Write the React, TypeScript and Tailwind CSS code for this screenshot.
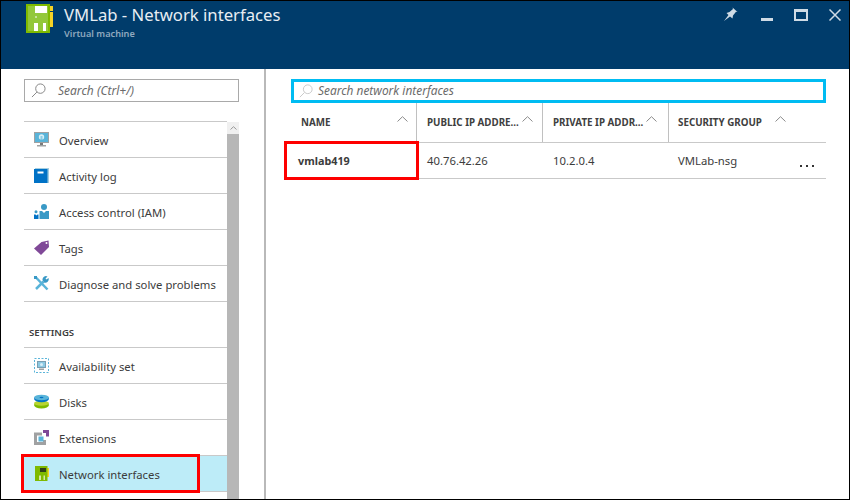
import type { ReactNode } from "react";

const font = { fontFamily: '"Noto Sans", "Open Sans", sans-serif' };

function SearchIcon({ className }: { className: string }) {
  return (
    <svg viewBox="0 0 16 16" className={className} fill="none" stroke="currentColor" strokeWidth="1">
      <circle cx="10" cy="6" r="5" />
      <path d="M6.3 9.7 1 15" />
    </svg>
  );
}

function Caret() {
  return (
    <svg viewBox="0 0 11 6" className="h-[6px] w-[11px] shrink-0 text-[#8a8a8a]" fill="none" stroke="currentColor">
      <path d="M.5 5.5 5.5.7l5 4.8" />
    </svg>
  );
}

function VmIcon() {
  return (
    <svg viewBox="0 0 27 29" className="mt-[3px] h-[29px] w-[27px] shrink-0">
      <rect x="24" y="2" width="3" height="5" fill="#f5d327" />
      <rect x="24" y="8" width="3" height="15" fill="#f5d327" />
      <rect width="24" height="29" fill="#7fba00" />
      <rect x="2" y="2" width="20" height="25" fill="#93c83a" />
      <rect x="9" y="2" width="12" height="7" fill="#fff" />
      <rect x="9" y="12" width="2" height="2" fill="#c8e29a" />
      <rect x="8" y="19" width="4" height="8" fill="#fff" />
      <rect x="17" y="19" width="3" height="8" fill="#fff" />
    </svg>
  );
}

const icons: Record<string, ReactNode> = {
  overview: (
    <svg viewBox="0 0 15 15" className="h-[15px] w-[15px] shrink-0">
      <rect x="0" y="0" width="15" height="11" fill="#a0a1a2" />
      <rect x="1" y="1" width="13" height="9" fill="#59b4d9" />
      <circle cx="7.5" cy="5" r="2.700" fill="#d9eff7" />
      <rect x="6.500" y="4" width="2" height="5" fill="#59b4d9" opacity="0.600" />
      <rect x="6" y="11" width="3" height="2" fill="#7a7a7a" />
      <rect x="3" y="13" width="9" height="1.500" fill="#a0a1a2" />
    </svg>
  ),
  log: (
    <svg viewBox="0 0 15 15" className="h-[15px] w-[15px] shrink-0">
      <rect x="1" y="0" width="14" height="15" fill="#a5cee0" />
      <rect x="0" y="1" width="13.500" height="14" fill="#0072c6" />
      <rect x="3.500" y="3.500" width="6" height="2" fill="#fff" />
    </svg>
  ),
  access: (
    <svg viewBox="0 0 15 15" className="h-[15px] w-[15px] shrink-0">
      <circle cx="10" cy="3" r="3" fill="#3999c6" />
      <path d="M5.500 15V7h2.500L10 9l2-2h3v8z" fill="#3999c6" />
      <circle cx="2" cy="7.800" r="1.500" fill="#3999c6" />
      <path d="M0 15v-4.500h1.500L2.500 11.500l1-1h1V15z" fill="#0072c6" />
    </svg>
  ),
  tags: (
    <svg viewBox="0 0 15 15" className="h-[15px] w-[15px] shrink-0">
      <path d="M0 8.500 7.500 2 14.500.5 15 7 7 15z" fill="#804998" />
      <circle cx="12.500" cy="3" r="1" fill="#fff" />
    </svg>
  ),
  diagnose: (
    <svg viewBox="0 0 15 15" className="h-[15px] w-[15px] shrink-0">
      <path d="M2 1.500 13.500 13.500" stroke="#59b4d9" strokeWidth="2.500" fill="none" />
      <path d="M2 13 9.500 5.500" stroke="#59b4d9" strokeWidth="2.500" fill="none" />
      <path d="M8.500 4a3.500 3.500 0 0 1 5-3.500l-2 2 1 1 2-1.500a3.500 3.500 0 0 1-4.500 4.500z" fill="#3999c6" />
      <rect x="0" y="0" width="3" height="3" fill="#3999c6" />
    </svg>
  ),
  availability: (
    <svg viewBox="0 0 15 15" className="h-[15px] w-[15px] shrink-0">
      <rect x="0.500" y="0.500" width="14" height="14" fill="none" stroke="#59b4d9" strokeDasharray="2 1.500" />
      <rect x="3" y="3" width="9" height="7" fill="#7a9eb0" />
      <rect x="4" y="4" width="7" height="5" fill="#8cc9e3" />
      <circle cx="7.5" cy="6.500" r="1.500" fill="#d9eff7" />
      <rect x="5" y="10.500" width="5" height="1.500" fill="#a0a1a2" />
    </svg>
  ),
  disks: (
    <svg viewBox="0 0 15 15" className="h-[15px] w-[15px] shrink-0">
      <ellipse cx="7.500" cy="11" rx="7.500" ry="3.500" fill="#7fba00" />
      <ellipse cx="7.500" cy="9.300" rx="7.500" ry="2.500" fill="#b8d432" />
      <ellipse cx="7.500" cy="4.800" rx="7.500" ry="3.500" fill="#0072c6" />
      <ellipse cx="7.500" cy="3.500" rx="7.500" ry="2.800" fill="#59b4d9" />
      <ellipse cx="7.500" cy="3.500" rx="2" ry="0.800" fill="#0072c6" />
    </svg>
  ),
  extensions: (
    <svg viewBox="0 0 15 15" className="h-[15px] w-[15px] shrink-0">
      <path d="M0 2.500h8V5.500H3v6.500h6v-2h3v5H0z" fill="#a0a1a2" />
      <rect x="4.500" y="6.500" width="5" height="5" fill="#59b4d9" />
      <path d="M9 0h6v6.500h-3V3H9z" fill="#804998" />
    </svg>
  ),
  nic: (
    <svg viewBox="0 0 14 15" className="h-[15px] w-[14px] shrink-0">
      <rect x="12" y="2" width="2" height="9" fill="#f5d327" />
      <rect width="12.500" height="15" fill="#7fba00" />
      <rect x="5" y="2" width="6" height="4" fill="#30401a" />
      <rect x="4" y="9.500" width="2" height="4.500" fill="#d6e8a8" />
      <rect x="8.500" y="9.500" width="1.500" height="4.500" fill="#d6e8a8" />
    </svg>
  ),
};

function NavItem({ icon, label }: { icon: string; label: string }) {
  return (
    <div className="flex h-9 items-center border-b border-[#c9c9c9] pl-[10px]">
      {icons[icon]}
      <span className="ml-[10px] mt-[4px] whitespace-nowrap">{label}</span>
    </div>
  );
}

function HeaderCell({ label, className, caretClass }: { label: string; className: string; caretClass: string }) {
  return (
    <div className={`flex h-[39px] items-center border-r border-[#c0c0c0] ${className}`}>
      <span className="mt-[2px] whitespace-nowrap text-[9.800px] font-bold text-[#404040]">{label}</span>
      <span className={`mb-2 ${caretClass}`}>
        <Caret />
      </span>
    </div>
  );
}

export default function App() {
  return (
    <div className="flex h-[500px] w-[850px] flex-col overflow-hidden border border-black bg-white text-[11.300px] text-[#3c3c3c]" style={font}>
      <header className="flex h-[68px] shrink-0 bg-[#003c6b] pl-[25px] text-white">
        <VmIcon />
        <div className="ml-[11px] mt-[1px]">
          <div className="text-[16.700px] leading-[26px] text-[#e8eef3]">VMLab - Network interfaces</div>
          <div className="text-[9.200px] font-semibold leading-[12px] text-[#8fa9bf]">Virtual machine</div>
        </div>
        <div className="ml-auto mr-[8px] mt-[6px] flex items-start gap-[21px] text-[#cfdbe5]">
          <svg viewBox="0 0 14 14" className="mr-[2px] h-[14px] w-[14px]" fill="currentColor">
            <path d="M0 14 4.500 8 2.500 6l3-1L9 2 8.500.5l5 4.500-1.500-.2L9 8.500 8.500 11.500 6 9.500z" />
          </svg>
          <div className="mt-[11px] h-[3px] w-[12px] bg-current" />
          <div className="mt-[2px] h-[12px] w-[14px] border-2 border-t-[3px] border-current" />
          <svg viewBox="0 0 12 12" className="mt-[2px] h-[12px] w-[12px]" stroke="currentColor" strokeWidth="1.500" fill="none">
            <path d="m.5.500 11 11M11.500.500l-11 11" />
          </svg>
        </div>
      </header>

      <div className="flex min-h-0 flex-1">
        <aside className="flex w-[265px] shrink-0 flex-col border-r-2 border-[#b9b9b9] pl-[23px] pr-[25px]">
          <div className="mt-[10px] flex h-[23px] shrink-0 items-center border border-[#a9a9a9] pl-[6px] text-[12px] italic text-[#6b6b6b]">
            <SearchIcon className="h-[15px] w-[15px] text-[#808080]" />
            <span className="ml-[12px]">Search (Ctrl+/)</span>
          </div>
          <div className="mt-[19px] flex min-h-0 flex-1">
            <nav className="min-w-0 flex-1 border-t border-[#c9c9c9]">
              <NavItem icon="overview" label="Overview" />
              <NavItem icon="log" label="Activity log" />
              <NavItem icon="access" label="Access control (IAM)" />
              <NavItem icon="tags" label="Tags" />
              <NavItem icon="diagnose" label="Diagnose and solve problems" />
              <div className="flex h-[46px] items-end border-b border-[#c9c9c9] pb-[7px] pl-[5px] text-[9.600px] font-semibold text-[#3c3c3c]">
                SETTINGS
              </div>
              <NavItem icon="availability" label="Availability set" />
              <NavItem icon="disks" label="Disks" />
              <NavItem icon="extensions" label="Extensions" />
              <div className="relative flex h-9 items-center border-b border-[#c9c9c9] bg-[#bdecf8] pl-[11px]">
                {icons.nic}
                <span className="ml-[10px] mt-[4px] whitespace-nowrap">Network interfaces</span>
                <div className="absolute -bottom-[2px] -left-[3px] -top-[2px] w-[179px] border-[3px] border-[#fe0000]" />
              </div>
            </nav>
            <div className="mt-px w-[12px] shrink-0 bg-[#b7b7b7]">
              <div className="flex h-[12px] items-center justify-center bg-[#f0f0f0]">
                <svg viewBox="0 0 7 4" className="h-1 w-[7px] text-[#999]" fill="none" stroke="currentColor">
                  <path d="M.5 3.500 3.500.7l3 2.800" />
                </svg>
              </div>
            </div>
          </div>
        </aside>

        <main className="min-w-0 flex-1 pl-[18px] pr-[23px]">
          <div className="ml-[7px] mt-[10px] flex h-[24px] items-center border-[3px] border-[#00bcf2] pl-[5px] text-[11.900px] italic text-[#6b6b6b]">
            <SearchIcon className="h-[14px] w-[14px] text-[#c4c4c4]" />
            <span className="ml-[5px]">Search network interfaces</span>
          </div>
          <div className="flex border-b border-[#c9c9c9]">
            <HeaderCell label="NAME" className="w-[133px] pl-[17px]" caretClass="ml-[67px]" />
            <HeaderCell label="PUBLIC IP ADDRE..." className="w-[126px] pl-[10px]" caretClass="ml-[3px]" />
            <HeaderCell label="PRIVATE IP ADDR..." className="w-[126px] pl-[10px]" caretClass="ml-[3px]" />
            <div className="flex h-[39px] items-center pl-[9px]">
              <span className="mt-[2px] whitespace-nowrap text-[9.800px] font-bold text-[#404040]">SECURITY GROUP</span>
              <span className="mb-2 ml-[13px]">
                <Caret />
              </span>
            </div>
          </div>
          <div className="relative flex h-9 items-center border-b border-[#c9c9c9] pt-[2px]">
            <div className="w-[133px] pl-[14px] text-[10.800px] font-bold">vmlab419</div>
            <div className="w-[126px] pl-[10px]">40.76.42.26</div>
            <div className="w-[126px] pl-[10px]">10.2.0.4</div>
            <div className="pl-[9px]">VMLab-nsg</div>
            <div className="absolute left-0 top-[-2px] h-[39px] w-[135px] border-[3px] border-[#fe0000]" />
            <div className="absolute right-[12px] top-[22px] flex gap-[4px]">
              <span className="h-[2px] w-[2px] bg-[#333]" />
              <span className="h-[2px] w-[2px] bg-[#333]" />
              <span className="h-[2px] w-[2px] bg-[#333]" />
            </div>
          </div>
        </main>
      </div>
    </div>
  );
}
